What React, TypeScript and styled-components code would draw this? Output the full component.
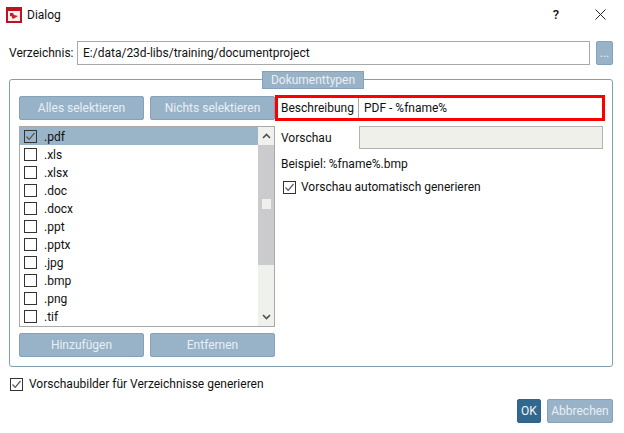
import React from 'react';
import styled, { createGlobalStyle } from 'styled-components';

const GlobalStyle = createGlobalStyle`
  html, body {
    margin: 0;
    padding: 0;
    background: #fff;
  }
  body {
    font-family: Roboto, "Open Sans", "Liberation Sans", sans-serif;
    font-size: 12px;
    color: #111;
  }
`;

const Window = styled.div`
  width: 624px;
  height: 433px;
  display: flex;
  flex-direction: column;
  background: #fff;
  overflow: hidden;
`;

const TitleBar = styled.div`
  height: 30px;
  display: flex;
  align-items: center;
  padding-left: 6px;
  gap: 5px;
`;

const TitleText = styled.span`
  flex: 1;
`;

const HelpMark = styled.span`
  width: 12px;
  text-align: center;
  font-size: 13px;
  font-weight: 500;
  margin: 0 28px 2px 0;
`;

const CloseMark = styled.svg`
  width: 11px;
  height: 11px;
  margin: 0 18px 2px 0;
`;

const Content = styled.div`
  flex: 1;
  display: flex;
  flex-direction: column;
  padding: 11px 11px 10px 9px;
`;

const PathRow = styled.div`
  height: 24px;
  display: flex;
  align-items: center;
`;

const PathLabel = styled.span`
  width: 68px;
`;

const PathInput = styled.div`
  flex: 1;
  height: 24px;
  box-sizing: border-box;
  border: 1px solid #a9a9a9;
  display: flex;
  align-items: center;
  padding-left: 5px;
`;

const Button = styled.div<{ $width?: number; $primary?: boolean }>`
  box-sizing: border-box;
  height: 24px;
  width: ${(p) => (p.$width ? `${p.$width}px` : 'auto')};
  flex: ${(p) => (p.$width ? '0 0 auto' : '1')};
  display: flex;
  align-items: center;
  justify-content: center;
  border-radius: 2px;
  border: 1px solid ${(p) => (p.$primary ? '#2f6388' : '#84a3ba')};
  background: ${(p) => (p.$primary ? '#33688e' : '#98b3c8')};
  color: ${(p) => (p.$primary ? '#f2f6f9' : '#e8eff4')};
`;

const BrowseButton = styled(Button)`
  margin-left: 6px;
`;

const Group = styled.div`
  position: relative;
  margin-top: 14px;
  height: 288px;
  box-sizing: border-box;
  border: 1px solid #7f9fb3;
  border-radius: 3px;
  padding: 16px 7px 0 9px;
  display: flex;
`;

const Legend = styled.div`
  position: absolute;
  top: -9px;
  left: 252px;
  width: 102px;
  height: 18px;
  box-sizing: border-box;
  border: 1px solid #84a3ba;
  background: #98b3c8;
  color: #e8eff4;
  display: flex;
  align-items: center;
  justify-content: center;
`;

const LeftColumn = styled.div`
  width: 256px;
  display: flex;
  flex-direction: column;
  gap: 6px;
`;

const ButtonRow = styled.div`
  display: flex;
  gap: 6px;
`;

const ListBox = styled.div`
  height: 201px;
  box-sizing: border-box;
  border: 1px solid #a9a9a9;
  display: flex;
`;

const Rows = styled.div`
  flex: 1;
  display: flex;
  flex-direction: column;
`;

const ListRow = styled.div<{ $selected?: boolean }>`
  height: 18px;
  flex: 0 0 18px;
  display: flex;
  align-items: center;
  gap: 7px;
  padding-left: 4px;
  background: ${(p) => (p.$selected ? '#9bb5c8' : 'transparent')};
`;

const RowText = styled.span`
  margin-top: 1px;
`;

const Box = styled.span`
  width: 13px;
  height: 13px;
  box-sizing: border-box;
  border: 1px solid #333;
  background: transparent;
  display: inline-flex;
  flex: 0 0 auto;
`;

const Scrollbar = styled.div`
  width: 16px;
  display: flex;
  flex-direction: column;
  background: #eef1ec;
`;

const ScrollArrow = styled.div<{ $bottom?: boolean }>`
  height: 18px;
  display: flex;
  align-items: center;
  justify-content: center;
  margin-top: ${(p) => (p.$bottom ? 'auto' : '0')};
`;

const ScrollTrack = styled.div`
  height: 120px;
  background: #cbcbcd;
  display: flex;
  flex-direction: column;
  align-items: center;
  padding-top: 54px;
  box-sizing: border-box;
`;

const ScrollThumb = styled.div`
  width: 9px;
  height: 10px;
  background: #eff1ec;
`;

const RightColumn = styled.div`
  flex: 1;
  display: flex;
  flex-direction: column;
`;

const Highlight = styled.div`
  height: 26px;
  margin-top: -1px;
  box-sizing: border-box;
  border: 3px solid #fb0000;
  display: flex;
  align-items: stretch;
`;

const FieldLabel = styled.span`
  width: 81px;
  box-sizing: border-box;
  padding-left: 3px;
  display: flex;
  align-items: center;
  border-right: 1px solid #a9a9a9;
`;

const FieldValue = styled.span`
  flex: 1;
  padding-left: 5px;
  display: flex;
  align-items: center;
`;

const PreviewRow = styled.div`
  margin-top: 5px;
  display: flex;
  align-items: center;
  padding-left: 6px;
`;

const PreviewLabel = styled.span`
  width: 78px;
`;

const PreviewInput = styled.div`
  width: 244px;
  height: 23px;
  box-sizing: border-box;
  border: 1px solid #b2b2b2;
  background: #eff0ea;
`;

const Example = styled.div`
  margin-top: 6px;
  padding-left: 6px;
  height: 17px;
  display: flex;
  align-items: center;
`;

const AutoCheck = styled.label`
  margin-top: 7px;
  padding-left: 8px;
  display: flex;
  align-items: center;
  gap: 5px;
  height: 16px;
`;

const DirCheck = styled.label`
  margin: 9px 0 0 1px;
  display: flex;
  align-items: center;
  gap: 6px;
  height: 16px;
`;

const Footer = styled.div`
  margin-top: auto;
  display: flex;
  justify-content: flex-end;
  gap: 6px;
`;

const CheckMark = () => (
  <svg width="11" height="11" viewBox="0 0 11 11" fill="none">
    <path d="M1.5 5.5 L4.2 8.3 L9.5 2" stroke="#555" strokeWidth="1.2" />
  </svg>
);

const Chevron = ({ down }: { down?: boolean }) => (
  <svg width="9" height="6" viewBox="0 0 9 6" fill="none">
    <path d={down ? 'M1 1 L4.5 4.5 L8 1' : 'M1 5 L4.5 1.5 L8 5'} stroke="#505050" strokeWidth="1.6" />
  </svg>
);

const AppLogo = () => (
  <svg width="16" height="16" viewBox="0 0 16 16">
    <rect width="16" height="16" fill="#bb1420" />
    <rect x="2" y="4" width="12" height="10" fill="#fbeeee" />
    <path d="M4 6 L7 6 L8 8 L12 9 L8 11.500 L6 11.500 L6 9.500 L4 9 Z" fill="#c8202a" />
  </svg>
);

const extensions = ['.pdf', '.xls', '.xlsx', '.doc', '.docx', '.ppt', '.pptx', '.jpg', '.bmp', '.png', '.tif'];

export default function App() {
  return (
    <Window>
      <GlobalStyle />
      <TitleBar>
        <AppLogo />
        <TitleText>Dialog</TitleText>
        <HelpMark>?</HelpMark>
        <CloseMark viewBox="0 0 11 11" fill="none">
          <path d="M0.5 0.5 L10.5 10.5 M10.5 0.5 L0.5 10.5" stroke="#222" strokeWidth="1" />
        </CloseMark>
      </TitleBar>
      <Content>
        <PathRow>
          <PathLabel>Verzeichnis:</PathLabel>
          <PathInput>E:/data/23d-libs/training/documentproject</PathInput>
          <BrowseButton $width={17}>...</BrowseButton>
        </PathRow>
        <Group>
          <Legend>Dokumenttypen</Legend>
          <LeftColumn>
            <ButtonRow>
              <Button>Alles selektieren</Button>
              <Button>Nichts selektieren</Button>
            </ButtonRow>
            <ListBox>
              <Rows>
                {extensions.map((ext, i) => (
                  <ListRow key={ext} $selected={i === 0}>
                    <Box>{i === 0 && <CheckMark />}</Box>
                    <RowText>{ext}</RowText>
                  </ListRow>
                ))}
              </Rows>
              <Scrollbar>
                <ScrollArrow><Chevron /></ScrollArrow>
                <ScrollTrack><ScrollThumb /></ScrollTrack>
                <ScrollArrow $bottom><Chevron down /></ScrollArrow>
              </Scrollbar>
            </ListBox>
            <ButtonRow>
              <Button>Hinzufügen</Button>
              <Button>Entfernen</Button>
            </ButtonRow>
          </LeftColumn>
          <RightColumn>
            <Highlight>
              <FieldLabel>Beschreibung</FieldLabel>
              <FieldValue>PDF - %fname%</FieldValue>
            </Highlight>
            <PreviewRow>
              <PreviewLabel>Vorschau</PreviewLabel>
              <PreviewInput />
            </PreviewRow>
            <Example>Beispiel: %fname%.bmp</Example>
            <AutoCheck>
              <Box><CheckMark /></Box>
              Vorschau automatisch generieren
            </AutoCheck>
          </RightColumn>
        </Group>
        <DirCheck>
          <Box><CheckMark /></Box>
          Vorschaubilder für Verzeichnisse generieren
        </DirCheck>
        <Footer>
          <Button $primary $width={24}>OK</Button>
          <Button $width={66}>Abbrechen</Button>
        </Footer>
      </Content>
    </Window>
  );
}
